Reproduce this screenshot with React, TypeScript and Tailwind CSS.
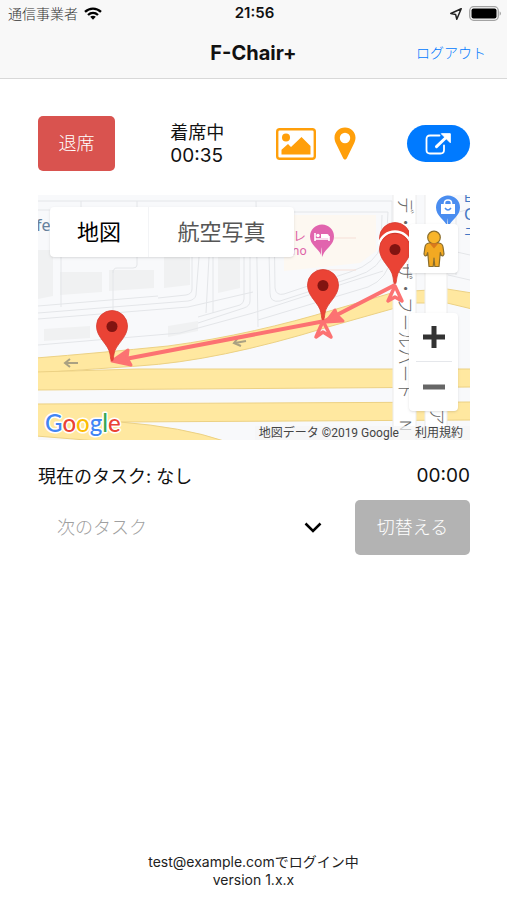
import React, { useState } from 'react';

function WifiIcon() {
  return (
    <svg width="18" height="13" viewBox="0 0 18 13" aria-hidden="true">
      <g fill="none" stroke="#000" strokeWidth="2.3">
        <path d="M1 4.9C5.6.6 12.4.6 17 4.9" />
        <path d="M4 8C6.900 5.300 11.100 5.300 14 8" />
      </g>
      <path d="M6.200 9.800C7.800 8.400 10.200 8.400 11.800 9.800L9 12.700Z" />
    </svg>
  );
}

function LocationIcon() {
  return (
    <svg width="12" height="12" viewBox="0 0 12 12" aria-hidden="true">
      <path
        d="M11.200 .8L.8 5.500L5.600 6.400L6.800 11.200Z"
        fill="none"
        stroke="#222"
        strokeWidth="1.500"
        strokeLinejoin="round"
      />
    </svg>
  );
}

function BatteryIcon() {
  return (
    <svg width="32" height="15" viewBox="0 0 32 15" aria-hidden="true">
      <rect x=".7" y=".7" width="28.600" height="13.600" rx="4" fill="none" stroke="#a3a3a3" strokeWidth="1.300" />
      <rect x="2.500" y="2.500" width="25" height="10" rx="2" />
      <path d="M30.600 5.300Q32 6 32 7.500Q32 9 30.600 9.700Z" fill="#a3a3a3" />
    </svg>
  );
}

function PictureIcon() {
  return (
    <svg width="40" height="32" viewBox="0 0 40 32" aria-hidden="true">
      <rect x="1.200" y="1.200" width="37.600" height="29.600" rx="2.500" fill="none" stroke="#ff9f0a" strokeWidth="2.400" />
      <circle cx="10" cy="9.500" r="4" fill="#ff9f0a" />
      <path d="M5.500 26.500V21.800L12 16L15 19L25.500 9L34.500 18V26.500Z" fill="#ff9f0a" />
    </svg>
  );
}

function MarkerIcon() {
  return (
    <svg width="22" height="33" viewBox="0 0 22 33" aria-hidden="true">
      <path
        fill="#ff9f0a"
        fillRule="evenodd"
        d="M11 .5C5 .5.500 5 .500 10.700C.500 13 1.200 14.700 2 16.500L9.300 31.500Q11 33.800 12.700 31.500L20 16.500C20.800 14.700 21.500 13 21.500 10.700C21.500 5 17 .5 11 .5ZM11 5.800A5.200 5.200 0 1 1 11 16.200A5.200 5.200 0 1 1 11 5.800Z"
      />
    </svg>
  );
}

function ExternalIcon() {
  return (
    <svg width="26" height="22" viewBox="0 0 26 22" aria-hidden="true">
      <path
        d="M14.500 2.500H5Q1.500 2.500 1.500 6V17Q1.500 20.500 5 20.500H15.500Q19 20.500 19 17V12.500"
        fill="none"
        stroke="#fff"
        strokeWidth="1.800"
        strokeLinecap="round"
      />
      <path d="M11.500 13.700L20.500 5" stroke="#fff" strokeWidth="3" strokeLinecap="round" />
      <path d="M16.300.700H25.300V9.700Z" fill="#fff" stroke="#fff" strokeWidth="1" strokeLinejoin="round" />
    </svg>
  );
}

function PegmanIcon() {
  return (
    <svg width="22" height="38" viewBox="0 0 22 38" aria-hidden="true">
      <g stroke="#8a6d2b" strokeWidth="1.200" strokeLinejoin="round">
        <path
          d="M6 13H16Q19.500 13.500 20 17L21 24Q20.500 26.500 18.300 25.500L17.300 22.500L16 36.500H11.800L11 28L10.200 36.500H6L4.700 22.500L3.700 25.500Q1.500 26.500 1 24L2 17Q2.500 13.500 6 13Z"
          fill="#f2a922"
        />
        <circle cx="11" cy="7.500" r="6.300" fill="#f8b52a" />
      </g>
      <path d="M6.500 13.300H15.500L11 18.500Z" fill="#d9781c" />
    </svg>
  );
}

function Pin({ x, y }: { x: number; y: number }) {
  return (
    <g transform={`translate(${x} ${y})`}>
      <path
        d="M0 0C-1.300 0-1.300-3-2-7C-3.500-17-15.500-23-15.500-35A15.500 15.500 0 0 1 15.500-35C15.500-23 3.500-17 2-7C1.300-3 1.300 0 0 0Z"
        fill="#ea4335"
        stroke="#d73c31"
        strokeWidth=".8"
      />
      <circle cy="-34.500" r="5.500" fill="#811411" />
    </g>
  );
}

function PoiPin({ x, y, color, children }: { x: number; y: number; color: string; children: React.ReactNode }) {
  return (
    <g transform={`translate(${x} ${y})`}>
      <path
        d="M0 20C-1-1-1 20-1 18C-3 12-12 8-12-.5A12 12 0 0 1 12-.5C12 8 3 12 1 18Z"
        fill={color}
      />
      {children}
    </g>
  );
}

function MapCanvas() {
  return (
    <svg
      className="block h-full w-full"
      viewBox="0 0 432 245"
      preserveAspectRatio="xMidYMid slice"
      role="img"
      aria-label="地図"
    >
      <rect width="432" height="245" fill="#f8f9fb" />

      {/* blocks */}
      <g fill="#f0f1f2">
        <path d="M0 55H15V101L0 104Z" />
        <path d="M22 77H64V97L22 100Z" />
        <path d="M71 75H116V93L71 96Z" />
        <path d="M126 62H152V90L126 93Z" />
        <path d="M180 62H202V93L180 98Z" />
        <path d="M6 134L52 131V143L6 146Z" />
        <path d="M130 131L160 126V136L130 142Z" />
      </g>
      <path d="M246 20H338V56L322 68L246 76Z" fill="#fdf8f1" />

      {/* side streets */}
      <g fill="none" stroke="#e4e6e9" strokeWidth="1">
        <path d="M0 6H354M0 15H205M225 17H350M43 6V62M99 6V15M23 62V112M75 75V118" />
        <path d="M99 62V70Q99 73 95 73H79Q75 73 75 78" />
        <path d="M154 62V94Q154 99 148 100L120 103M161 62L158 100Q157 105 150 106L0 118" />
        <path d="M0 111L120 101M0 124L150 112L215 97M0 150L142 138L215 118L345 76" />
        <path d="M175 62V118M171 62L168 118M206 62V104Q206 108 202 110L160 122" />
        <path d="M212 62V106Q212 111 206 113L160 128M218 6L220 132" />
        <path d="M230 17L232 98Q232 108 242 106L316 82Q344 74 348 52L350 17" />
        <path d="M236 20L237 93Q238 101 246 99L312 77Q339 68 343 50L344 20" />
        <path d="M354 6V60Q350 84 330 92L220 125" />
        <path d="M410 20L432 14M410 55L432 60M410 80L432 85M418 15V80" />
      </g>
      <path d="M278 43H318M278 75H318" stroke="#f6dfd7" />

      {/* main roads */}
      <g fill="#ffe8a0" stroke="#ecd184" strokeWidth="1">
        <path d="M-2 163Q60 158 130 151C190 143 245 130 295 115L357 97L409 94L434 98V114L409 108H375L290 132Q180 166 100 171L-2 178Z" />
        <path d="M-2 177L100 174H434V192L150 194L-2 195Z" />
        <path d="M-2 209L434 207V225L82 227Q145 232 186 246H60L-2 241Z" />
      </g>
      <g fill="none" stroke="#aaa182" strokeWidth="2">
        <path d="M40 168H28M32 164L27 168L32 172" />
        <path d="M208 146L197 148M200 143L196 148L203 151" />
      </g>

      {/* station buildings */}
      <g fill="#fff" stroke="#ececec" strokeWidth="1">
        <rect x="355" y="-2" width="23" height="250" />
        <rect x="387" y="-2" width="22" height="250" />
      </g>
      <g
        fill="#666"
        fontFamily="Inter, 'Noto Sans CJK JP', sans-serif"
        fontSize="17"
        fontWeight="300"
      >
        <text transform="translate(361 2) rotate(90)">デ・</text>
        <text transform="translate(361 68) rotate(90)">ザ・フールハート</text>
        <text transform="translate(362 225) rotate(90)" fontSize="15">N</text>
        <text transform="translate(393 213) rotate(90)">ア</text>
      </g>

      {/* places */}
      <g fontFamily="'Noto Sans', 'Noto Sans CJK JP', sans-serif">
        <text x="-2" y="36" fontSize="16" fill="#66809b">fe</text>
        <text x="255" y="45" fontSize="13" fill="#dd63a7">レ</text>
        <text x="254" y="60" fontSize="12" fill="#dd63a7">no</text>
        <text x="426" y="7" fontSize="13" fill="#4477c4">E</text>
        <text x="426" y="25" fontSize="16" fill="#4477c4">C</text>
        <text x="426" y="41" fontSize="12" fill="#4477c4">ニ</text>
      </g>
      <PoiPin x={284} y={42} color="#e164ae">
        <path
          d="M-7-4V4M-7 2H7M7 4V-1"
          fill="none"
          stroke="#fff"
          strokeWidth="1.600"
        />
        <path d="M-1-3H5Q7-3 7 0V1H-1Z" fill="#fff" />
        <circle cx="-4" cy="-1.500" r="1.700" fill="#fff" />
      </PoiPin>
      <PoiPin x={410} y={13} color="#4a8df0">
        <path d="M-7-4H7V6H-7Z" fill="#fff" />
        <path d="M-3.500-4V-5Q-3.500-8 0-8Q3.500-8 3.500-5V-4" fill="none" stroke="#fff" strokeWidth="1.600" />
        <path d="M-3 0Q0 4 3 0" fill="none" stroke="#4a8df0" strokeWidth="1.500" />
      </PoiPin>

      {/* travelled path */}
      <g fill="none" stroke="#fc7272" strokeWidth="4" strokeLinejoin="round">
        <path d="M357 90L287 126L82 165" />
        <path d="M357 91L350 106L357 102L364 106Z" strokeWidth="3.500" />
        <path d="M285 126L278 142L285 137L293 142Z" strokeWidth="3.500" />
      </g>
      <path d="M74 166L90 155L89 163L93 170Z" fill="#fc7272" stroke="#fc7272" strokeWidth="3" strokeLinejoin="round" />
      <path d="M288 127L297 115L299 120L305 126Z" fill="#fc7272" stroke="#fc7272" strokeWidth="3" strokeLinejoin="round" />

      <Pin x={74} y={166} />
      <Pin x={285} y={125} />
      <Pin x={357} y={78} />
      <path
        d="M341 57A16.500 16.500 0 0 1 373 57"
        fill="none"
        stroke="#fff"
        strokeWidth="2.500"
        transform="translate(0 -8)"
      />
      <Pin x={357} y={89} />
    </svg>
  );
}

const LOGO = [
  { letter: 'G', color: '#4285f4' },
  { letter: 'o', color: '#ea4335' },
  { letter: 'o', color: '#fbbc05' },
  { letter: 'g', color: '#4285f4' },
  { letter: 'l', color: '#34a853' },
  { letter: 'e', color: '#ea4335' },
];

function GoogleLogo() {
  return (
    <svg className="absolute bottom-0 left-1" width="84" height="34" viewBox="0 0 84 34" aria-label="Google">
      <text
        x="3"
        y="26"
        fontFamily="Lato, sans-serif"
        fontSize="24"
        fontWeight="500"
        stroke="#fff"
        strokeWidth="3"
        strokeLinejoin="round"
        paintOrder="stroke"
      >
        {LOGO.map((item, i) => (
          <tspan key={i} fill={item.color}>
            {item.letter}
          </tspan>
        ))}
      </text>
    </svg>
  );
}

function MapView() {
  return (
    <section className="relative mt-6 h-[245px] overflow-hidden">
      <MapCanvas />

      <div className="absolute left-3 top-3 flex h-[50px] rounded-sm bg-white text-[22px] shadow">
        <button type="button" className="w-[99px] border-r border-gray-100 text-black">
          地図
        </button>
        <button type="button" className="w-[145px] text-[#565656]">
          航空写真
        </button>
      </div>

      <button
        type="button"
        aria-label="ストリートビュー"
        className="absolute right-3 top-[29px] flex size-[49px] items-center justify-center rounded-sm bg-white shadow"
      >
        <PegmanIcon />
      </button>

      <GoogleLogo />
      <div className="absolute bottom-0 right-0 flex h-[14px] items-center gap-4 bg-[#f5f5f5]/70 pl-1 pr-[7px] font-[Roboto,'Noto_Sans_CJK_JP',sans-serif] text-[12px] leading-[14px] text-[#444]">
        <span>地図データ ©2019 Google</span>
        <a href="#terms">利用規約</a>
      </div>

      <div className="absolute right-3 top-[118px] flex w-[49px] flex-col items-center rounded-sm bg-white shadow">
        <button type="button" aria-label="拡大" className="flex h-12 w-full items-center justify-center">
          <svg width="24" height="24" viewBox="0 0 24 24" aria-hidden="true">
            <path d="M12 1V23M1 12H23" stroke="#333" strokeWidth="5" />
          </svg>
        </button>
        <div className="h-px w-9 bg-gray-200" />
        <button type="button" aria-label="縮小" className="flex h-[49px] w-full items-center justify-center">
          <svg width="24" height="24" viewBox="0 0 24 24" aria-hidden="true">
            <path d="M1 12H23" stroke="#666" strokeWidth="5" />
          </svg>
        </button>
      </div>
    </section>
  );
}

function Header() {
  return (
    <header className="border-b border-[#d8d8d8] bg-[#f8f8f8]">
      <div className="grid h-[27px] grid-cols-3 items-center pl-2 pr-[6px]">
        <div className="flex items-center gap-[6px]">
          <span className="text-[14px] font-light text-[#333]">通信事業者</span>
          <WifiIcon />
        </div>
        <span className="text-center text-[15px] font-semibold">21:56</span>
        <div className="flex items-center justify-end gap-[7px]">
          <LocationIcon />
          <BatteryIcon />
        </div>
      </div>
      <div className="grid h-[51px] grid-cols-3 items-center px-[21px]">
        <h1 className="col-start-2 text-center text-[20px] font-bold leading-6">F-Chair+</h1>
        <button type="button" className="justify-self-end text-[14px] font-light text-[#007aff]">
          ログアウト
        </button>
      </div>
    </header>
  );
}

export default function App() {
  const [task, setTask] = useState('');

  return (
    <div className="flex min-h-screen flex-col bg-white font-[Inter,'Noto_Sans_CJK_JP',sans-serif] text-[#111]">
      <Header />

      <main className="flex-1 pl-[38px] pr-[37px] pt-[37px]">
        <div className="flex h-[55px] items-center justify-between">
          <button type="button" className="h-full w-[77px] rounded-[5px] bg-[#d9534f] text-[18px] font-light text-white">
            退席
          </button>
          <div className="pl-1 text-[18px] leading-[23px]">
            <p>着席中</p>
            <p className="text-[19px]">00:35</p>
          </div>
          <div className="flex items-center gap-[18px]">
            <button type="button" aria-label="写真">
              <PictureIcon />
            </button>
            <button type="button" aria-label="現在地">
              <MarkerIcon />
            </button>
          </div>
          <button
            type="button"
            aria-label="外部リンクを開く"
            className="flex h-[37px] w-[63px] items-center justify-center rounded-full bg-[#007aff]"
          >
            <ExternalIcon />
          </button>
        </div>

        <MapView />

        <div className="mt-3 flex h-12 items-center justify-between text-[18px]">
          <p>現在のタスク: なし</p>
          <p className="text-[19px]">00:00</p>
        </div>

        <div className="flex h-[55px] items-center gap-5">
          <div className="relative h-full flex-1">
            <select
              aria-label="次のタスク"
              value={task}
              onChange={(e) => setTask(e.target.value)}
              className="h-full w-full appearance-none bg-transparent pl-[19px] text-[18px] font-light text-[#a0a0a0] outline-none"
            >
              <option value="">次のタスク</option>
            </select>
            <svg
              className="pointer-events-none absolute right-[13px] top-[22px]"
              width="18"
              height="12"
              viewBox="0 0 18 12"
              aria-hidden="true"
            >
              <path d="M1.500 1.500L9 9L16.500 1.500" fill="none" stroke="#000" strokeWidth="2.500" />
            </svg>
          </div>
          <button type="button" className="h-full w-[115px] rounded-[5px] bg-[#b3b3b3] text-[18px] font-light text-white">
            切替える
          </button>
        </div>
      </main>

      <footer className="pb-[11px] text-center text-[14px] leading-[18px] text-[#222]">
        <p>test@example.comでログイン中</p>
        <p>version 1.x.x</p>
      </footer>
    </div>
  );
}
